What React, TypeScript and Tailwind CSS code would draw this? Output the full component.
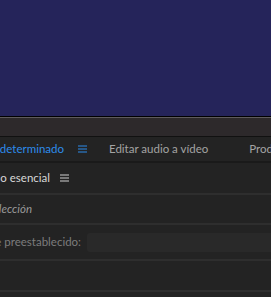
export default function App() {
  const font = { fontFamily: 'Lato, "Noto Sans", sans-serif' }
  return (
    <div
      className="flex h-[297px] w-[271px] flex-col overflow-hidden bg-[#232323] text-[11.5px]"
      style={font}
    >
      {/* program monitor */}
      <div className="h-[116px] shrink-0 bg-[#25245a]" />
      <div className="h-px shrink-0 bg-black" />
      <div className="h-px shrink-0 bg-[#5e5b5c]" />
      <div className="h-[18px] shrink-0 bg-[#2d292b]" />
      <div className="h-px shrink-0 bg-[#111]" />

      {/* workspaces bar */}
      <div className="flex h-[24px] shrink-0 items-center whitespace-nowrap bg-[#232323]">
        <div className="flex w-[64px] shrink-0 justify-end overflow-hidden">
          <span className="text-[#2d8ceb]">Predeterminado</span>
        </div>
        <HamburgerIcon className="ml-[14px] text-[#2d8ceb]" />
        <span className="ml-[22px] text-[#a3a3a3]">Editar audio a vídeo</span>
        <span className="ml-[41px] text-[#a3a3a3]">Producción</span>
      </div>
      <div className="h-[2px] shrink-0 bg-[#1a1a1a]" />

      {/* panel header */}
      <div className="flex h-[30px] shrink-0 items-center whitespace-nowrap">
        <div className="flex w-[50px] shrink-0 justify-end overflow-hidden">
          <span className="text-[#d8d8d8]">Sonido esencial</span>
        </div>
        <HamburgerIcon className="ml-[10px] text-[#cfcfcf]" />
      </div>
      <div className="h-[2px] shrink-0 bg-[#2e2e2e]" />

      <div className="flex h-[28px] shrink-0 items-center whitespace-nowrap">
        <div className="flex w-[32px] shrink-0 justify-end overflow-hidden">
          <span className="italic text-[#9a9a9a]">Sin selección</span>
        </div>
      </div>
      <div className="h-[2px] shrink-0 bg-[#2e2e2e]" />

      <div className="flex h-[34px] shrink-0 items-center whitespace-nowrap">
        <div className="flex w-[81px] shrink-0 justify-end overflow-hidden">
          <span className="text-[#7c7c7c]">Nombre de preestablecido:</span>
        </div>
        <div className="ml-[6px] h-[19px] flex-1 rounded-l-[3px] bg-[#292929]" />
      </div>
      <div className="h-[2px] shrink-0 bg-[#2e2e2e]" />

      <div className="h-[29px] shrink-0" />
      <div className="h-[2px] shrink-0 bg-[#2e2e2e]" />
      <div className="flex-1" />
    </div>
  )
}

function HamburgerIcon({ className = '' }: { className?: string }) {
  return (
    <svg width="9" height="8" viewBox="0 0 9 8" className={'shrink-0 ' + className}>
      <rect x="0" y="0.5" width="9" height="1" fill="currentColor" />
      <rect x="0" y="3.5" width="9" height="1" fill="currentColor" />
      <rect x="0" y="6.5" width="9" height="1" fill="currentColor" />
    </svg>
  )
}
